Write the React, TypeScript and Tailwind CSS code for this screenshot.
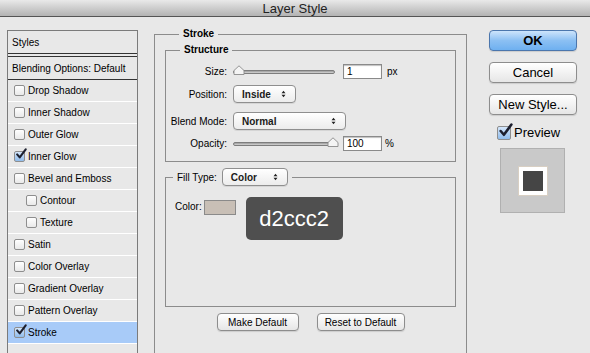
import type { ReactNode } from 'react';

const FONT = { fontFamily: '"Liberation Sans", Arial, sans-serif' };

function Checkbox({ checked = false, large = false }: { checked?: boolean; large?: boolean }) {
  const size = large ? 'h-[14px] w-[14px]' : 'h-[11px] w-[11px]';
  return (
    <span className={`relative inline-block shrink-0 ${size}`}>
      <span
        className={`absolute inset-0 rounded-[2px] border border-[#8e8e8e] ${
          checked ? 'bg-gradient-to-b from-[#d4e6fa] to-[#8fbcec]' : 'bg-gradient-to-b from-[#ffffff] to-[#e9e9e9]'
        }`}
      />
      {checked && (
        <svg
          viewBox="0 0 14 14"
          className={`absolute ${large ? '-top-[3px] left-[1px] h-[15px] w-[15px]' : '-top-[3px] left-[1px] h-[12px] w-[12px]'}`}
        >
          <path d="M2.5 7.5 L5.5 11 L12.5 1.5" fill="none" stroke="#1c1f2e" strokeWidth="2.4" strokeLinecap="round" strokeLinejoin="round" />
        </svg>
      )}
    </span>
  );
}

function StyleRow({
  label,
  checked,
  indent,
  active,
}: {
  label: string;
  checked?: boolean;
  indent?: boolean;
  active?: boolean;
}) {
  return (
    <div
      className={`flex h-[22px] items-center border-b border-white text-[10px] text-black ${
        active ? 'bg-[#a8cbf8]' : ''
      } ${indent ? 'pl-[18px]' : 'pl-[6px]'}`}
    >
      <Checkbox checked={checked} />
      <span className="ml-[3px]">{label}</span>
    </div>
  );
}

function UpDown() {
  return (
    <svg viewBox="0 0 6 10" className="h-[8px] w-[5px]">
      <path d="M0.5 4 L3 1 L5.5 4 Z M0.5 6 L3 9 L5.5 6 Z" fill="#222" />
    </svg>
  );
}

function Select({ value, width }: { value: string; width: string }) {
  return (
    <div
      className={`flex h-[18px] items-center justify-between rounded-[4px] border border-[#8f8f8f] bg-gradient-to-b from-[#ffffff] to-[#ececec] pl-[8px] pr-[9px] text-[10px] font-bold text-[#1a1a1a] shadow-[0_1px_0_rgba(0,0,0,0.08)] ${width}`}
    >
      <span>{value}</span>
      <UpDown />
    </div>
  );
}

function Slider({ atEnd }: { atEnd?: boolean }) {
  return (
    <div className="flex h-[15px] w-[102px] items-center">
      <div className="relative h-[4px] w-full rounded-full border border-[#7d7d7d] bg-gradient-to-b from-[#9a9a9a] to-[#d6d6d6]">
        <svg
          viewBox="0 0 12 10"
          className={`absolute -top-[6px] h-[10px] w-[12px] ${atEnd ? '-right-[5px]' : '-left-[1px]'}`}
        >
          <path d="M1 9.5 L1 5.5 L6 0.8 L11 5.5 L11 9.5 Z" fill="#f4f4f4" stroke="#8a8a8a" strokeWidth="0.9" />
        </svg>
      </div>
    </div>
  );
}

function NumInput({ value }: { value: string }) {
  return (
    <div className="ml-[8px] flex h-[15px] w-[39px] items-center border border-[#8a8a8a] bg-white pl-[3px] text-[10px] text-black shadow-[inset_0_1px_1px_rgba(0,0,0,0.25)]">
      {value}
    </div>
  );
}

function Label({ children }: { children: ReactNode }) {
  return <span className="w-[67px] shrink-0 pr-[6px] text-right text-[10px] text-black">{children}</span>;
}

function MacButton({ children, primary, className = '' }: { children: ReactNode; primary?: boolean; className?: string }) {
  return (
    <div
      className={`flex items-center justify-center rounded-[4px] border text-black ${
        primary
          ? 'border-[#4b76ad] bg-gradient-to-b from-[#cde4fb] via-[#8cc0f3] to-[#6eb0f0]'
          : 'border-[#8d8d8d] bg-gradient-to-b from-[#ffffff] to-[#e6e6e6]'
      } shadow-[0_1px_1px_rgba(0,0,0,0.12)] ${className}`}
    >
      {children}
    </div>
  );
}

export default function App() {
  const styleRows = [
    { label: 'Drop Shadow' },
    { label: 'Inner Shadow' },
    { label: 'Outer Glow' },
    { label: 'Inner Glow', checked: true },
    { label: 'Bevel and Emboss' },
    { label: 'Contour', indent: true },
    { label: 'Texture', indent: true },
    { label: 'Satin' },
    { label: 'Color Overlay' },
    { label: 'Gradient Overlay' },
    { label: 'Pattern Overlay' },
    { label: 'Stroke', checked: true, active: true },
  ];

  return (
    <div className="h-[353px] w-[590px] overflow-hidden bg-[#e8e8e8]" style={FONT}>
      {/* Title bar */}
      <div className="flex h-[17px] items-center justify-center border-b border-[#555] bg-gradient-to-b from-[#e9e9e9] to-[#b3b3b3] text-[13px] leading-none text-[#222]">
        Layer Style
      </div>

      <div className="flex">
        {/* Styles list */}
        <div className="ml-[7px] mt-[13px] h-[340px] w-[131px] shrink-0 border border-[#7b7b7b] bg-[#e8e8e8]">
          <div className="flex h-[22px] items-center pl-[4px] text-[10px] text-black">Styles</div>
          <div className="h-[4px] border-y border-[#333] bg-[#e8e8e8]" />
          <div className="flex h-[23px] items-center border-b border-[#333] pl-[4px] text-[10px] text-black">
            Blending Options: Default
          </div>
          {styleRows.map((r) => (
            <StyleRow key={r.label} {...r} />
          ))}
        </div>

        {/* Stroke panel */}
        <fieldset className="ml-[16px] mt-[10px] h-[340px] w-[313px] shrink-0 border border-[#8c8c8c] px-[10px]">
          <legend className="ml-[14px] px-[4px] text-[10px] font-bold leading-[14px] text-black">Stroke</legend>

          <fieldset className="mt-[2px] border border-[#8c8c8c] pb-[10px]">
            <legend className="ml-[14px] px-[4px] text-[10px] font-bold leading-[14px] text-black">Structure</legend>
            <div className="mt-[7px] flex h-[15px] items-center">
              <Label>Size:</Label>
              <Slider />
              <NumInput value="1" />
              <span className="ml-[5px] text-[10px] text-black">px</span>
            </div>
            <div className="mt-[6px] flex h-[18px] items-center">
              <Label>Position:</Label>
              <Select value="Inside" width="w-[63px]" />
            </div>
            <div className="mt-[9px] flex h-[18px] items-center">
              <Label>Blend Mode:</Label>
              <Select value="Normal" width="w-[113px]" />
            </div>
            <div className="mt-[6px] flex h-[15px] items-center">
              <Label>Opacity:</Label>
              <Slider atEnd />
              <NumInput value="100" />
              <span className="ml-[3px] text-[10px] text-black">%</span>
            </div>
          </fieldset>

          <fieldset className="mt-[6px] border border-[#8c8c8c]">
            <legend className="ml-[7px] flex items-center px-[4px]">
              <span className="mr-[5px] text-[10px] text-black">Fill Type:</span>
              <Select value="Color" width="w-[66px]" />
            </legend>
            <div className="flex h-[120px] items-start pl-[9px] pt-[11px]">
              <span className="mt-[3px] text-[10px] leading-[14px] text-black">Color:</span>
              <span className="ml-[2px] mt-[3px] h-[15px] w-[32px] border border-[#8a8a8a] bg-[#c8bfb6]" />
              <div className="ml-[10px] flex h-[43px] w-[97px] items-center justify-center rounded-[5px] bg-[#4f4f4f] text-[22px] text-white">
                d2ccc2
              </div>
            </div>
          </fieldset>

          <div className="mt-[6px] flex justify-center gap-[18px]">
            <MacButton className="h-[18px] w-[82px] text-[10px]">Make Default</MacButton>
            <MacButton className="h-[18px] w-[88px] text-[10px]">Reset to Default</MacButton>
          </div>
        </fieldset>

        {/* Right column */}
        <div className="ml-[22px] mt-[13px] flex w-[88px] flex-col">
          <MacButton primary className="h-[21px] w-[88px] text-[13px] font-bold">
            OK
          </MacButton>
          <MacButton className="mt-[11px] h-[21px] w-[88px] text-[13px]">Cancel</MacButton>
          <MacButton className="mt-[11px] h-[21px] w-[88px] text-[13px]">New Style...</MacButton>
          <div className="ml-[8px] mt-[10px] flex h-[16px] items-center">
            <Checkbox checked large />
            <span className="ml-[3px] text-[13px] text-black">Preview</span>
          </div>
          <div className="ml-[11px] mt-[7px] flex h-[65px] w-[65px] items-center justify-center border border-[#b0b0b0] bg-[#c9c9c9]">
            <div className="flex h-[30px] w-[30px] items-center justify-center border border-[#d8cfc3] bg-white">
              <div className="h-[20px] w-[20px] bg-[#454545]" />
            </div>
          </div>
        </div>
      </div>
    </div>
  );
}
